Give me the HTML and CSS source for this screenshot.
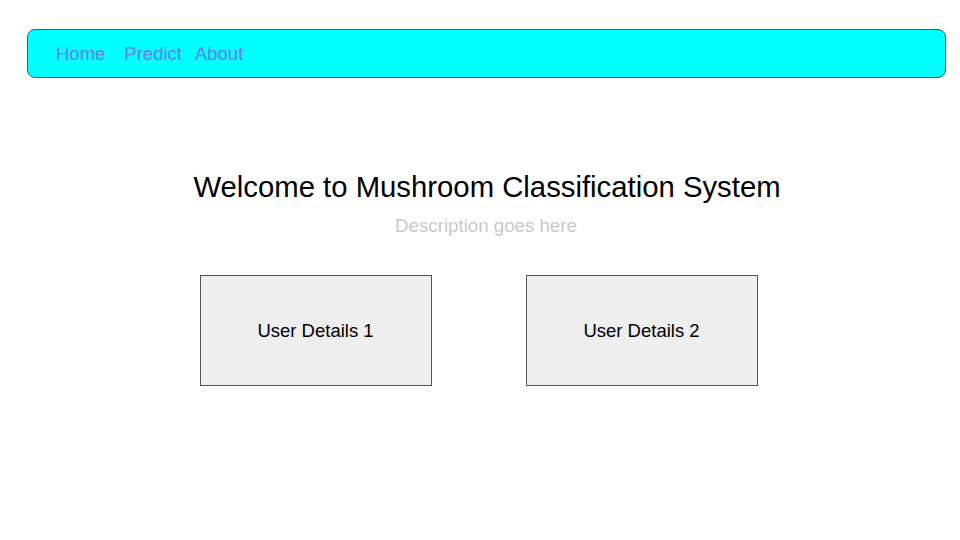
FILE: index.html
```html
<!DOCTYPE html>
<html>
<head>
<meta charset="utf-8">
<link rel="stylesheet" href="styles.css">
</head>
<body>
<nav class="nav">
  <a class="nav-link home" href="#">Home</a>
  <a class="nav-link predict" href="#">Predict</a>
  <a class="nav-link" href="#">About</a>
</nav>
<main class="main">
  <h1 class="title">Welcome to Mushroom Classification System</h1>
  <p class="desc">Description goes here</p>
  <div class="cards">
    <div class="card">User Details 1</div>
    <div class="card">User Details 2</div>
  </div>
</main>
</body>
</html>
```
FILE: styles.css
```css
html, body {
  margin: 0;
  padding: 0;
  background: #fff;
  font-family: "Liberation Sans", Arial, sans-serif;
}
body {
  padding: 29px 15px 0 27px;
}
.nav {
  box-sizing: border-box;
  width: 919px;
  height: 49px;
  background: #00ffff;
  border: 1px solid #555;
  border-radius: 8px;
  display: flex;
  align-items: center;
  padding-left: 28px;
  padding-top: 1px;
}
.nav-link {
  font-size: 18.5px;
  color: #667eea;
  text-decoration: none;
}
.nav-link.home {
  margin-right: 19px;
}
.nav-link.predict {
  margin-right: 13px;
}
.main {
  display: flex;
  flex-direction: column;
  align-items: center;
  margin-left: -27px;
  margin-right: -15px;
  padding-top: 92px;
}
.title {
  margin: 0;
  font-weight: normal;
  font-size: 29.3px;
  line-height: 34px;
  color: #000;
  padding-left: 14px;
}
.desc {
  margin: 11px 0 0 0;
  font-size: 18.7px;
  line-height: 22px;
  color: #c8c8c8;
  padding-left: 12px;
}
.cards {
  display: flex;
  gap: 94px;
  margin-top: 38px;
  margin-left: -3px;
}
.card {
  box-sizing: border-box;
  width: 232px;
  height: 111px;
  background: #eeeeee;
  border: 1px solid #555;
  display: flex;
  align-items: center;
  justify-content: center;
  font-size: 18.5px;
  color: #000;
}
```
